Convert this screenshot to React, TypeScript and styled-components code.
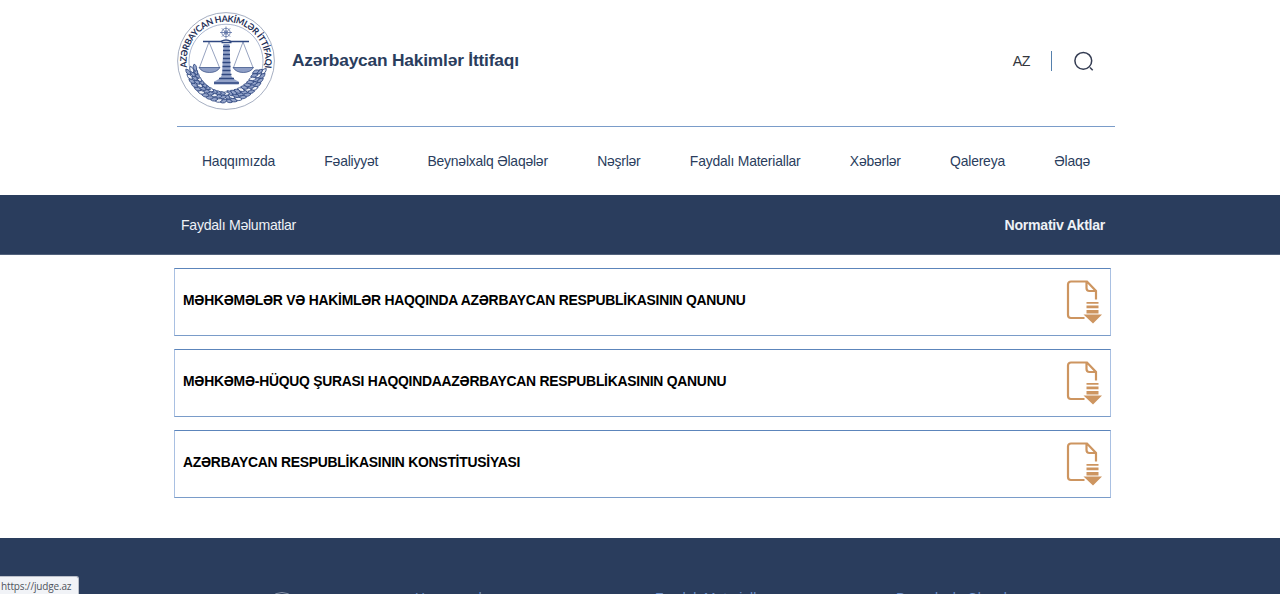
import React from "react";
import styled, { createGlobalStyle } from "styled-components";

const Global = createGlobalStyle`
  * { box-sizing: border-box; }
  body { margin: 0; background: #fff; font-family: "Liberation Sans", Arial, sans-serif; overflow: hidden; }
`;

const navy = "#2a3d5d";
const line = "#7a9cc9";

const Page = styled.div`
  height: 594px;
  overflow: hidden;
  display: flex;
  flex-direction: column;
  position: relative;
`;
const Header = styled.header`
  width: 938px;
  margin-left: 177px;
  height: 127px;
  flex: none;
  display: flex;
  align-items: center;
  padding-bottom: 5px;
  border-bottom: 1px solid ${line};
`;
const Brand = styled.h1`
  margin: 0 auto 1px 17px;
  font-size: 17.33px;
  letter-spacing: -0.19px;
  line-height: 20px;
  font-weight: 700;
  color: ${navy};
  white-space: nowrap;
`;
const Language = styled.span`
  font-size: 14.2px;
  letter-spacing: -0.4px;
  color: #33363d;
  padding-right: 21px;
`;
const Divider = styled.span`
  width: 1px;
  height: 20px;
  background: #5580ad;
  margin-right: 22px;
`;
const SearchIcon = styled.svg`
  width: 20px;
  height: 20px;
  margin-right: 21px;
`;
const Nav = styled.nav`
  width: 888px;
  height: 68px;
  flex: none;
  margin-left: 202px;
  display: flex;
  align-items: center;
  justify-content: space-between;
`;
const NavLink = styled.a`
  font-size: 13.9px;
  letter-spacing: -0.19px;
  line-height: 20px;
  color: ${navy};
  white-space: nowrap;
`;
const TitleBar = styled.div`
  height: 60px;
  flex: none;
  padding: 0 175px 0 181px;
  display: flex;
  align-items: center;
  justify-content: space-between;
  background: ${navy};
  border-bottom: 1px solid #52627c;
  color: #eef1f6;
  font-size: 14.1px;
  letter-spacing: -0.27px;
`;
const Current = styled.strong`
  font-weight: 700;
`;
const List = styled.main`
  width: 937px;
  margin: 13px 0 40px 174px;
  flex: none;
  display: flex;
  flex-direction: column;
  gap: 13px;
`;
const Row = styled.article`
  height: 68px;
  border: 1px solid;
  border-color: #5c85bb #a9c0e2 #7a9cc9 #a9c0e2;
  display: flex;
  align-items: center;
  justify-content: space-between;
  padding: 0 7px 4px 8px;
`;
const RowTitle = styled.h2`
  margin: 0;
  font-size: 13.9px;
  letter-spacing: -0.245px;
  line-height: 18px;
  font-weight: 700;
  color: #000;
  white-space: nowrap;
`;
const FileSvg = styled.svg`
  width: 37px;
  height: 44px;
  margin-top: 3px;
`;
const Footer = styled.footer`
  height: 260px;
  flex: none;
  background: ${navy};
  display: grid;
  grid-template-columns: 149px 240px 241px 240px;
  padding: 53px 0 0 266px;
`;
const FooterHeading = styled.h3`
  margin: 0;
  font-size: 13.8px;
  line-height: 16px;
  font-weight: 400;
  color: #6f92cc;
`;
const FooterMark = styled.svg`
  width: 32px;
  height: 32px;
`;
const StatusUrl = styled.div`
  position: absolute;
  left: 0;
  bottom: 0;
  width: 79px;
  height: 18px;
  padding: 0 0 0 1px;
  line-height: 18px;
  font-family: "Open Sans", "Noto Sans", sans-serif;
  font-size: 10px;
  letter-spacing: -0.15px;
  color: #50545c;
  background: #f1f3f7;
  border-top: 1px solid #b9bec8;
  border-right: 1px solid #b9bec8;
  border-top-right-radius: 3px;
`;
const LogoSvg = styled.svg`
  width: 98px;
  height: 98px;
  flex: none;
`;

const wreath = Array.from({ length: 66 }, (_, i) => {
  const step = Math.floor(i / 3);
  const lane = i % 3;
  const deg = 14 + step * 7.2 + lane * 2.2;
  const a = (deg * Math.PI) / 180;
  const r = [39, 35, 31.5][lane];
  return {
    x: 49 + Math.cos(a) * r,
    y: 50 + Math.sin(a) * r,
    deg: deg + (deg < 90 ? -65 : 65) + lane * 12,
  };
});

const Logo = () => (
  <LogoSvg viewBox="0 0 98 98" fill="none" stroke="#2f4780">
    <circle cx="49" cy="49" r="48.4" strokeWidth=".7" stroke="#7e8ba6" />
    <path d="M13.6 60A37 37 0 1 1 84.4 60" strokeWidth=".6" stroke="#7487b0" />
    <defs>
      <path id="ring" d="M10.2 55.500A39.300 39.300 0 1 1 87.800 55.500" />
    </defs>
    <text fill="#1f2f57" stroke="none" fontFamily="Lato, sans-serif" fontWeight="700" fontSize="8.9">
      <textPath href="#ring" textLength="136">AZƏRBAYCAN HAKİMLƏR İTTİFAQI</textPath>
    </text>
    <g strokeWidth=".7" stroke="#4a629a">
      <circle cx="49" cy="20.500" r="4.200" />
      <circle cx="49" cy="20.500" r="1.700" />
      <path d="M49 14.500v12M43 20.500h12M44.800 16.300l8.400 8.400M53.200 16.300l-8.400 8.400" />
    </g>
    <path d="M26 29.500h18q5-3 10 0h18" strokeWidth="1.500" />
    <path d="M32 30 22.500 55.500M32 30 42.500 55.500M66 30 56.500 55.500M66 30 76 55.500" strokeWidth=".5" />
    <path d="M22 55.500h21q-3 5-10.500 5T22 55.500zM56 55.500h20.500q-3 5-10.200 5T56 55.500z" fill="#8f9fc6" strokeWidth=".7" />
    <path d="M46.500 32h6l1.200 31q2 4 8 6.500v3H37v-3q6-2.500 8-6.500z" fill="#93a2c8" stroke="none" />
    <path d="M44.500 30.500h10M46 34.500h7M46 38.500h7M46 42.500h7M46 46.500h7M45.500 50.500h8M45.500 54.500h8M45.500 58.500h8M44.500 62.500h10M42 66.500h15M37 71h25" strokeWidth="1.600" />
    <g strokeWidth=".8">
      {wreath.map((p, i) => (
        <path
          key={i}
          transform={`translate(${p.x} ${p.y}) rotate(${p.deg})`}
          d="M-3.800 0Q0-3.800 3.800 0Q0 3.200-3.800 0z"
          fill={i % 4 ? "#93a3c9" : "#edf0f7"}
        />
      ))}
    </g>
  </LogoSvg>
);

const FileIcon = () => (
  <FileSvg viewBox="0 0 37 44" fill="none">
    <path d="M18.500 38H5a3 3 0 0 1-3-3V4.500a3 3 0 0 1 3-3h16l9 9.500v8.500M20.500 1.500v6.500a3 3 0 0 0 3 3h6.500" stroke="#cd9560" strokeWidth="2.200" />
    <path d="M20.500 22h12v1.800h-12zM20.500 25.600h12v2.600h-12zM20.500 30h12v3.400h-12zM17.500 34.600H36l-9 8.800z" fill="#cd9560" />
  </FileSvg>
);

const navItems = ["Haqqımızda", "Fəaliyyət", "Beynəlxalq Əlaqələr", "Nəşrlər", "Faydalı Materiallar", "Xəbərlər", "Qalereya", "Əlaqə"];
const documents = [
  "MƏHKƏMƏLƏR VƏ HAKİMLƏR HAQQINDA AZƏRBAYCAN RESPUBLİKASININ QANUNU",
  "MƏHKƏMƏ-HÜQUQ ŞURASI HAQQINDAAZƏRBAYCAN RESPUBLİKASININ QANUNU",
  "AZƏRBAYCAN RESPUBLİKASININ KONSTİTUSİYASI",
];

export default function App() {
  return (
    <Page>
      <Global />
      <Header>
        <Logo />
        <Brand>Azərbaycan Hakimlər İttifaqı</Brand>
        <Language>AZ</Language>
        <Divider />
        <SearchIcon viewBox="0 0 20 20" fill="none" stroke="#343c52" strokeWidth="1.5">
          <circle cx="9.300" cy="9.800" r="8.400" />
          <path d="m16 16.500 2.700 2.700" />
        </SearchIcon>
      </Header>
      <Nav>
        {navItems.map((t) => <NavLink key={t}>{t}</NavLink>)}
      </Nav>
      <TitleBar>
        <span>Faydalı Məlumatlar</span>
        <Current>Normativ Aktlar</Current>
      </TitleBar>
      <List>
        {documents.map((t) => (
          <Row key={t}>
            <RowTitle>{t}</RowTitle>
            <FileIcon />
          </Row>
        ))}
      </List>
      <Footer>
        <FooterMark viewBox="0 0 32 32" fill="none" stroke="#8793a8">
          <circle cx="16" cy="17" r="15.500" />
        </FooterMark>
        <FooterHeading>Haqqımızda</FooterHeading>
        <FooterHeading>Faydalı Materiallar</FooterHeading>
        <FooterHeading>Beynəlxalq Əlaqələr</FooterHeading>
      </Footer>
      <StatusUrl>https://judge.az</StatusUrl>
    </Page>
  );
}
